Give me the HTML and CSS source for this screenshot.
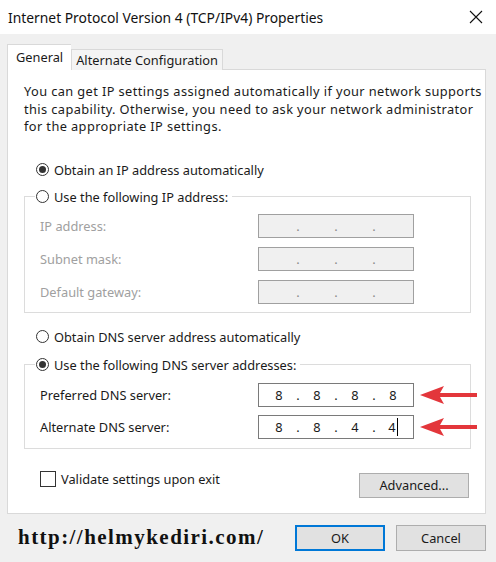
FILE: index.html
```html
<!DOCTYPE html>
<html lang="en">
<head>
    <meta charset="UTF-8">
    <meta name="viewport" content="width=device-width, initial-scale=1.0">
    <title>Internet Protocol Version 4 (TCP/IPv4) Properties</title>
    <link rel="stylesheet" href="styles.css">
</head>
<body>

    <header class="titlebar">
        <span class="title">Internet Protocol Version 4 (TCP/IPv4) Properties</span>
        <svg class="close" width="14" height="14" viewBox="0 0 14 14">
            <path d="M1 1 L13 13 M13 1 L1 13" stroke="#111" stroke-width="1.1" fill="none"/>
        </svg>
    </header>

    <main class="dialog">
        <nav class="tabs">
            <div class="tab active">General</div>
            <div class="tab">Alternate Configuration</div>
        </nav>

        <section class="panel">
            <p class="intro">You can get IP settings assigned automatically if your network supports<br>this capability. Otherwise, you need to ask your network administrator<br>for the appropriate IP settings.</p>

            <div class="option first"><span class="radio checked"></span>Obtain an IP address automatically</div>

            <fieldset class="group disabled">
                <legend class="option"><span class="radio"></span>Use the following IP address:</legend>
                <div class="field">
                    <span class="label">IP address:</span>
                    <div class="ip"><span class="seg"></span><span class="dot">.</span><span class="seg"></span><span class="dot">.</span><span class="seg"></span><span class="dot">.</span><span class="seg"></span></div>
                </div>
                <div class="field">
                    <span class="label">Subnet mask:</span>
                    <div class="ip"><span class="seg"></span><span class="dot">.</span><span class="seg"></span><span class="dot">.</span><span class="seg"></span><span class="dot">.</span><span class="seg"></span></div>
                </div>
                <div class="field">
                    <span class="label">Default gateway:</span>
                    <div class="ip"><span class="seg"></span><span class="dot">.</span><span class="seg"></span><span class="dot">.</span><span class="seg"></span><span class="dot">.</span><span class="seg"></span></div>
                </div>
            </fieldset>

            <div class="option dns"><span class="radio"></span>Obtain DNS server address automatically</div>

            <fieldset class="group dns-group">
                <legend class="option"><span class="radio checked"></span>Use the following DNS server addresses:</legend>
                <div class="field">
                    <span class="label">Preferred DNS server:</span>
                    <div class="ip"><span class="seg">8</span><span class="dot">.</span><span class="seg">8</span><span class="dot">.</span><span class="seg">8</span><span class="dot">.</span><span class="seg">8</span></div>
                    <svg class="arrow" width="58" height="22" viewBox="0 0 58 22">
                        <path d="M0 11 L24 2 L20 9 L57 9 L57 13 L20 13 L24 20 Z" fill="#e3363b"/>
                    </svg>
                </div>
                <div class="field">
                    <span class="label">Alternate DNS server:</span>
                    <div class="ip"><span class="seg">8</span><span class="dot">.</span><span class="seg">8</span><span class="dot">.</span><span class="seg">4</span><span class="dot">.</span><span class="seg"><span class="caret">4</span></span></div>
                    <svg class="arrow" width="58" height="22" viewBox="0 0 58 22">
                        <path d="M0 11 L24 2 L20 9 L57 9 L57 13 L20 13 L24 20 Z" fill="#e3363b"/>
                    </svg>
                </div>
            </fieldset>

            <div class="panel-foot">
                <div class="check"><span class="box"></span>Validate settings upon exit</div>
                <button class="btn advanced" type="button">Advanced...</button>
            </div>
        </section>

        <div class="actions">
            <span class="watermark">http://helmykediri.com/</span>
            <button class="btn ok" type="button">OK</button>
            <button class="btn" type="button">Cancel</button>
        </div>
    </main>

</body>
</html>
```

FILE: styles.css
```css
body {
    margin: 0;
    background-color: #f0f0f0;
    font-family: "Noto Sans", "Open Sans", sans-serif;
    font-size: 12.8px;
    color: #1a1a1a;
}

.titlebar {
    display: flex;
    justify-content: space-between;
    align-items: center;
    height: 34px;
    padding: 0 13px 0 8px;
    background-color: #fff;
}

.title {
    font-size: 13.85px;
    color: #111;
}

.dialog {
    padding: 10px 10px 0 7px;
}

/* tabs */
.tabs {
    display: flex;
    align-items: flex-end;
    margin-bottom: -1px;
}

.tab {
    height: 20px;
    line-height: 20px;
    padding: 0 4px;
    border: 1px solid #d9d9d9;
    border-bottom: none;
    background-color: #f4f4f4;
}

.tab.active {
    position: relative;
    z-index: 1;
    height: 25px;
    line-height: 24px;
    padding: 0 8px;
    background-color: #fff;
    border-right: none;
}

/* white panel */
.panel {
    background-color: #fff;
    border: 1px solid #d9d9d9;
    padding: 13px 14px 15px 16px;
}

.intro {
    margin: 0;
    line-height: 17.5px;
    letter-spacing: 0.4px;
    white-space: nowrap;
}

.option {
    display: flex;
    align-items: center;
    height: 20px;
    gap: 5px;
}

.option.first {
    margin: 24px 0 0 12px;
}

.option.dns {
    margin: 14px 0 0 12px;
}

.radio {
    width: 11px;
    height: 11px;
    border: 1px solid #333;
    border-radius: 50%;
    display: flex;
    align-items: center;
    justify-content: center;
    background-color: #fff;
}

.radio.checked::after {
    content: "";
    width: 7px;
    height: 7px;
    border-radius: 50%;
    background-color: #333;
}

.group {
    margin: 7px 0 0 0;
    padding: 7px 15px 8px 15px;
    border: 1px solid #dcdcdc;
    display: flex;
    flex-direction: column;
    gap: 9px;
}

.group legend {
    margin-left: -5px;
    padding: 0 4px 0 1px;
}

.dns-group {
    margin-top: 8px;
    padding-top: 8px;
    padding-bottom: 9px;
    gap: 8px;
}

.field {
    position: relative;
    display: grid;
    grid-template-columns: 218px 156px;
    align-items: center;
}

.disabled .label {
    color: #a0a0a0;
}

.ip {
    display: flex;
    height: 22px;
    align-items: center;
    padding-left: 3px;
    border: 1px solid #7a7a7a;
    background-color: #fff;
}

.disabled .ip {
    background-color: #f0f0f0;
    border-color: #a0a0a0;
}

.seg {
    width: 34px;
    text-align: center;
}

.dot {
    width: 4px;
    text-align: center;
}

.disabled .dot {
    color: #8a8a8a;
}

.caret {
    border-right: 1px solid #000;
    padding-right: 1px;
}

/* red annotation arrows */
.arrow {
    position: absolute;
    left: 380px;
    top: 1px;
}

.panel-foot {
    display: flex;
    justify-content: space-between;
    align-items: flex-start;
    margin-top: 22px;
    padding: 0 2px 0 16px;
}

.check {
    display: flex;
    align-items: center;
    gap: 5px;
    height: 16px;
}

.box {
    width: 14px;
    height: 14px;
    border: 1px solid #333;
}

.btn {
    font-family: inherit;
    font-size: 12.8px;
    color: #1a1a1a;
    background-color: #e1e1e1;
    border: 1px solid #adadad;
    padding: 0;
    width: 90px;
    height: 26px;
}

.advanced {
    width: 110px;
    height: 25px;
    margin-top: 2px;
}

.actions {
    display: flex;
    align-items: center;
    gap: 11px;
    margin-top: 11px;
}

.watermark {
    flex: 1;
    padding-left: 11px;
    font-family: "Liberation Serif", serif;
    font-weight: bold;
    font-size: 21px;
    letter-spacing: 1.45px;
    color: #111;
}

.ok {
    border: 2px solid #0078d7;
}
```
